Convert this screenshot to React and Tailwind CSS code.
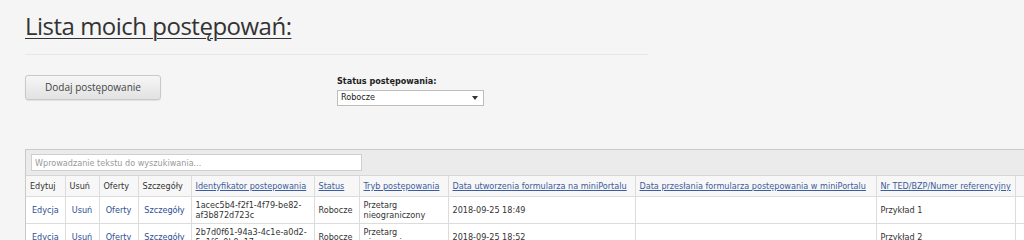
import React from "react";

const columns = [
  { label: "Edytuj", width: 39 },
  { label: "Usuń", width: 34 },
  { label: "Oferty", width: 39 },
  { label: "Szczegóły", width: 53 },
  { label: "Identyfikator postepowania", width: 123, link: true },
  { label: "Status", width: 45, link: true },
  { label: "Tryb postępowania", width: 89, link: true },
  { label: "Data utworzenia formularza na miniPortalu", width: 187, link: true },
  { label: "Data przesłania formularza postępowania w miniPortalu", width: 241, link: true },
  { label: "Nr TED/BZP/Numer referencyjny", width: 139, link: true },
  { label: "", width: 140 },
];

const rows = [
  {
    id: "1acec5b4-f2f1-4f79-be82-af3b872d723c",
    status: "Robocze",
    mode: "Przetarg nieograniczony",
    created: "2018-09-25 18:49",
    sent: "",
    ref: "Przykład 1",
  },
  {
    id: "2b7d0f61-94a3-4c1e-a0d2-5e1f6c0b9a17",
    status: "Robocze",
    mode: "Przetarg nieograniczony",
    created: "2018-09-25 18:52",
    sent: "",
    ref: "Przykład 2",
  },
];

const cell = "border border-[#dcdcdc] px-[4px] align-middle";

export default function App() {
  return (
    <div className="h-screen w-[1024px] overflow-hidden bg-[#f5f5f5] text-[#333] font-['DejaVu_Sans_Condensed','DejaVu_Sans',sans-serif]">
      <div className="pl-[25px] pt-[10px]">
        <h1 className="w-[623px] border-b border-[#e6e6e6] pb-[12px] font-['Open_Sans',sans-serif] text-[24px] leading-[32px] tracking-[-0.5px] text-[#333]">
          <span className="underline decoration-1 underline-offset-[3px]">
            Lista moich postępowań:
          </span>
        </h1>

        <div className="mt-[20px] flex items-start">
          <button className="h-[25px] w-[136px] rounded-[3px] border border-[#c8c8c8] bg-gradient-to-b from-[#f6f6f6] to-[#e2e2e2] font-['Open_Sans',sans-serif] text-[10px] text-[#444] shadow-[0_1px_1px_rgba(0,0,0,0.08)]">
            Dodaj postępowanie
          </button>

          <div className="ml-[176px] flex flex-col">
            <label className="text-[9px] font-bold leading-[12px] text-[#222]">
              Status postępowania:
            </label>
            <div className="mt-[3px] flex h-[16px] w-[147px] items-center justify-between border border-[#bdbdbd] bg-white pl-[3px] pr-[5px]">
              <span className="text-[9px] text-[#222]">Robocze</span>
              <svg width="6" height="4" viewBox="0 0 6 4">
                <path d="M0 0h6L3 4z" fill="#333" />
              </svg>
            </div>
          </div>
        </div>

        <div className="mt-[43px] w-max border border-[#c9c9c9] bg-white">
          <div className="border-b border-[#d6d6d6] bg-[#ebebeb] px-[5px] py-[4px]">
            <input
              placeholder="Wprowadzanie tekstu do wyszukiwania..."
              className="block h-[17px] w-[331px] border border-[#cfcfcf] bg-white px-[3px] text-[9px] text-[#333] placeholder:text-[#999] outline-none"
            />
          </div>
          <table className="w-[1129px] table-fixed border-collapse text-[9px] leading-[10px]">
            <colgroup>
              {columns.map((c, i) => (
                <col key={i} style={{ width: c.width }} />
              ))}
            </colgroup>
            <thead>
              <tr className="h-[20px] bg-[#f7f7f7]">
                {columns.map((c, i) => (
                  <th
                    key={i}
                    className={`${cell} border-t-0 text-left font-normal whitespace-nowrap first:border-l-0`}
                  >
                    {c.link ? (
                      <a href="#" className="text-[#3b5c9e] underline">
                        {c.label}
                      </a>
                    ) : (
                      <span className="text-[#333]">{c.label}</span>
                    )}
                  </th>
                ))}
              </tr>
            </thead>
            <tbody>
              {rows.map((r) => (
                <tr key={r.id} className="h-[27px] bg-white">
                  <td className={`${cell} border-l-0 text-center`}>
                    <a href="#" className="text-[#2d4f93]">Edycja</a>
                  </td>
                  <td className={`${cell} text-center`}>
                    <a href="#" className="text-[#2d4f93]">Usuń</a>
                  </td>
                  <td className={`${cell} text-center`}>
                    <a href="#" className="text-[#2d4f93]">Oferty</a>
                  </td>
                  <td className={`${cell} text-center`}>
                    <a href="#" className="text-[#2d4f93]">Szczegóły</a>
                  </td>
                  <td className={cell}>{r.id}</td>
                  <td className={cell}>{r.status}</td>
                  <td className={cell}>{r.mode}</td>
                  <td className={cell}>{r.created}</td>
                  <td className={cell}>{r.sent}</td>
                  <td className={cell}>{r.ref}</td>
                  <td className={cell}></td>
                </tr>
              ))}
            </tbody>
          </table>
        </div>
      </div>
    </div>
  );
}
